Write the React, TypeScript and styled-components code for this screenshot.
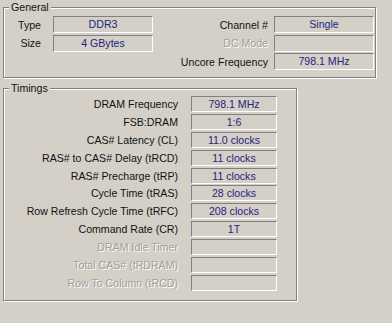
import React from "react";
import styled, { createGlobalStyle } from "styled-components";

const GlobalStyle = createGlobalStyle`
  html, body {
    margin: 0;
    padding: 0;
    background: #d4d0c8;
  }
  body {
    font-family: "Liberation Sans", Arial, sans-serif;
    font-size: 10.6px;
    color: #000;
  }
`;

interface ROW {
  label: string;
  value?: string;
  disabled?: boolean;
}

const timings: ROW[] = [
  { label: "DRAM Frequency", value: "798.1 MHz" },
  { label: "FSB:DRAM", value: "1:6" },
  { label: "CAS# Latency (CL)", value: "11.0 clocks" },
  { label: "RAS# to CAS# Delay (tRCD)", value: "11 clocks" },
  { label: "RAS# Precharge (tRP)", value: "11 clocks" },
  { label: "Cycle Time (tRAS)", value: "28 clocks" },
  { label: "Row Refresh Cycle Time (tRFC)", value: "208 clocks" },
  { label: "Command Rate (CR)", value: "1T" },
  { label: "DRAM Idle Timer", disabled: true },
  { label: "Total CAS# (tRDRAM)", disabled: true },
  { label: "Row To Column (tRCD)", disabled: true },
];

const App: React.FC = () => {
  return (
    <Window>
      <GlobalStyle />
      <Group width={373} height={71}>
        <Legend>General</Legend>
        <GeneralBody>
          <LeftPane>
            <Label>Type</Label>
            <Value>DDR3</Value>
            <Label>Size</Label>
            <Value>4 GBytes</Value>
          </LeftPane>
          <RightPane>
            <Label>Channel #</Label>
            <Value>Single</Value>
            <Label disabled>DC Mode</Label>
            <Value />
            <Label>Uncore Frequency</Label>
            <Value>798.1 MHz</Value>
          </RightPane>
        </GeneralBody>
      </Group>
      <TimingsGroup width={294} height={213}>
        <Legend>Timings</Legend>
        <TimingsBody>
          {timings.map((t) => (
            <React.Fragment key={t.label}>
              <Label disabled={t.disabled}>{t.label}</Label>
              <Value>{t.value}</Value>
            </React.Fragment>
          ))}
        </TimingsBody>
      </TimingsGroup>
    </Window>
  );
};

export default App;

const Window = styled.div`
  width: 392px;
  height: 323px;
  box-sizing: border-box;
  padding: 7px 0 0 3px;
  display: flex;
  flex-direction: column;
  align-items: flex-start;
`;

const Group = styled.div<{ width: number; height: number }>`
  position: relative;
  box-sizing: border-box;
  width: ${(p) => p.width}px;
  height: ${(p) => p.height}px;
  border: 1px solid #808080;
  box-shadow: inset 1px 1px 0 #fff, 1px 1px 0 #fff;
`;

const TimingsGroup = styled(Group)`
  margin-top: 10px;
`;

const Legend = styled.span`
  position: absolute;
  top: -7px;
  left: 5px;
  padding: 0 2px;
  background: #d4d0c8;
  line-height: 13px;
  color: #111;
`;

const GeneralBody = styled.div`
  display: flex;
  padding: 8px 0 0 1px;
`;

const LeftPane = styled.div`
  display: grid;
  grid-template-columns: 36px 100px;
  grid-auto-rows: 17px;
  column-gap: 12px;
  row-gap: 1.5px;
  align-items: center;
`;

const RightPane = styled.div`
  display: grid;
  grid-template-columns: 111px 100px;
  grid-auto-rows: 17px;
  column-gap: 6px;
  row-gap: 1.5px;
  align-items: center;
  margin-left: 4px;
`;

const TimingsBody = styled.div`
  display: grid;
  grid-template-columns: 174px 86px;
  grid-auto-rows: 16px;
  column-gap: 13px;
  row-gap: 1.9px;
  align-items: center;
  padding: 7px 0 0 0;
`;

const Label = styled.div<{ disabled?: boolean }>`
  text-align: right;
  white-space: nowrap;
  color: ${(p) => (p.disabled ? "#a19e98" : "#111")};
  text-shadow: ${(p) => (p.disabled ? "1px 1px 0 #fff" : "none")};
`;

const Value = styled.div`
  box-sizing: border-box;
  height: 100%;
  border-top: 1px solid #808080;
  border-left: 1px solid #808080;
  border-bottom: 1px solid #fff;
  border-right: 1px solid #fff;
  color: #24247e;
  text-align: center;
  line-height: 14px;
  white-space: nowrap;
`;
